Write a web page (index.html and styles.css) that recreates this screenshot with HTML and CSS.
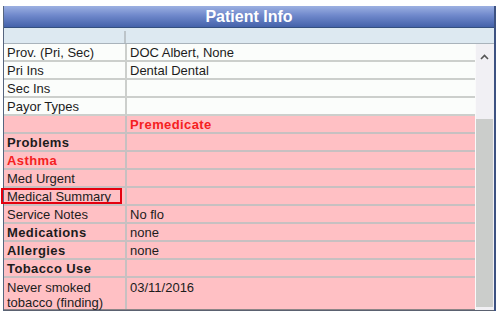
FILE: index.html
```html
<!DOCTYPE html>
<html lang="en">
<head>
    <meta charset="UTF-8">
    <title>Patient Info</title>
    <link rel="stylesheet" href="styles.css">
</head>
<body>
    <div class="panel">
        <div class="panel-title">Patient Info</div>
        <div class="col-head">
            <div class="c1"></div>
            <div class="c2"></div>
        </div>
        <div class="body">
            <div class="grid">
                <div class="row white"><div class="c1">Prov. (Pri, Sec)</div><div class="c2">DOC Albert, None</div></div>
                <div class="row white"><div class="c1">Pri Ins</div><div class="c2">Dental Dental</div></div>
                <div class="row white"><div class="c1">Sec Ins</div><div class="c2"></div></div>
                <div class="row white"><div class="c1">Payor Types</div><div class="c2"></div></div>
                <div class="row"><div class="c1"></div><div class="c2 bold red">Premedicate</div></div>
                <div class="row"><div class="c1 bold">Problems</div><div class="c2"></div></div>
                <div class="row"><div class="c1 bold red">Asthma</div><div class="c2"></div></div>
                <div class="row"><div class="c1">Med Urgent</div><div class="c2"></div></div>
                <div class="row"><div class="c1 marked">Medical Summary</div><div class="c2"></div></div>
                <div class="row"><div class="c1">Service Notes</div><div class="c2">No flo</div></div>
                <div class="row"><div class="c1 bold">Medications</div><div class="c2">none</div></div>
                <div class="row"><div class="c1 bold">Allergies</div><div class="c2">none</div></div>
                <div class="row"><div class="c1 bold">Tobacco Use</div><div class="c2"></div></div>
                <div class="row tall"><div class="c1">Never smoked tobacco (finding)</div><div class="c2">03/11/2016</div></div>
            </div>
            <div class="scrollbar">
                <div class="arrow">
                    <svg width="9" height="6" viewBox="0 0 9 6"><path d="M1 5 L4.5 1.5 L8 5" fill="none" stroke="#555" stroke-width="1.6"/></svg>
                </div>
                <div class="thumb"></div>
            </div>
        </div>
    </div>
</body>
</html>
```

FILE: styles.css
```css
body {
    margin: 0;
    background: #fff;
    font-family: "Liberation Sans", Arial, sans-serif;
    font-size: 13px;
    color: #1c1c1c;
}

.panel {
    margin: 6px 0 0 3px;
    width: 490px;
    border-left: 1px solid #56657f;
    border-right: 2px solid #3d5282;
}

.panel-title {
    height: 21px;
    line-height: 22px;
    text-align: center;
    color: #fff;
    font-weight: bold;
    font-size: 16px;
    background: linear-gradient(#9cb0e2, #6f88cb 45%, #4462aa);
    border-bottom: 1px solid #34507f;
}

.col-head {
    display: flex;
    height: 15px;
    background: #dde9f1;
    border-bottom: 1px solid #a9b3bb;
}

.col-head .c1 {
    width: 120px;
    border-right: 2px solid #bcc4c9;
    margin: 3px 0 0;
}

.body {
    display: flex;
    background: #f1f0f4;
    border-bottom: 1px solid #5a6170;
}

.grid {
    width: 471px;
    border-right: 1px solid #fafafa;
}

.row {
    display: flex;
    height: 16px;
    background: #ffc0c4;
    border-bottom: 2px solid #c7c0c1;
}

.row.white {
    background: #fbfdfb;
    border-bottom-color: #cccfcc;
}

.row.tall {
    height: 31px;
    border-bottom: 1px solid #8d8587;
}

.c1,
.c2 {
    line-height: 18px;
    white-space: nowrap;
}

.row .c1 {
    position: relative;
    width: 118px;
    padding-left: 3px;
    border-right: 2px solid #c7c0c1;
}

.row.white .c1 {
    border-right-color: #cccfcc;
}

.row .c2 {
    flex: 1;
    padding-left: 3px;
}

.row.tall .c1 {
    white-space: normal;
    line-height: 15px;
    padding-top: 2px;
}

.row.tall .c2 {
    line-height: 15px;
    padding-top: 2px;
}

.bold {
    font-weight: bold;
    letter-spacing: 0.4px;
}

.red {
    color: #f52021;
}

.marked::after {
    content: "";
    position: absolute;
    left: -3px;
    top: 0;
    width: 117px;
    height: 12px;
    border: 2px solid #e5000e;
}

.scrollbar {
    width: 18px;
}

.arrow {
    height: 75px;
    padding: 10px 0 0 4px;
    box-sizing: border-box;
}

.arrow svg {
    display: block;
}

.thumb {
    width: 17px;
    height: 188px;
    background: #cbcdcb;
}
```
